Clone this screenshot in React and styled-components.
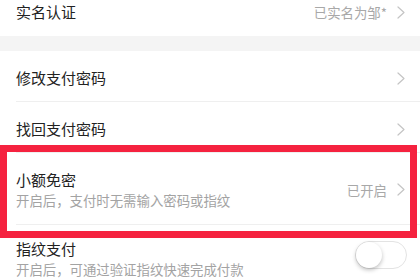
import styled, { createGlobalStyle } from 'styled-components'

const GlobalStyle = createGlobalStyle`
	html, body {
		margin: 0;
		padding: 0;
		background: #fff;
		overflow: hidden;
	}
	body {
		font-family: "Noto Sans CJK SC", "Noto Sans", sans-serif;
	}
`

const Chevron = () => (
	<svg width="8" height="13" viewBox="0 0 8 13">
		<path d="M1 1 L7 6.5 L1 12" fill="none" stroke="#c4c4c4" strokeWidth="1.2" strokeLinecap="round" strokeLinejoin="round" />
	</svg>
)

const App = () => {
	return (
		<Page>
			<GlobalStyle />
			<Row>
				<Title>实名认证</Title>
				<Extra>已实名为邹*<Chevron /></Extra>
			</Row>
			<Gap />
			<Row divided>
				<Title>修改支付密码</Title>
				<Extra><Chevron /></Extra>
			</Row>
			<Row divided>
				<Title>找回支付密码</Title>
				<Extra><Chevron /></Extra>
			</Row>
			<DoubleRow divided>
				<Texts>
					<Title>小额免密</Title>
					<Sub>开启后，支付时无需输入密码或指纹</Sub>
				</Texts>
				<Extra>已开启<Chevron /></Extra>
			</DoubleRow>
			<DoubleRow raised>
				<Texts>
					<Title>指纹支付</Title>
					<Sub>开启后，可通过验证指纹快速完成付款</Sub>
				</Texts>
				<Toggle><Knob /></Toggle>
			</DoubleRow>
			<Highlight />
		</Page>
	)
}

const Page = styled.div`
	position: relative;
	width: 420px;
	margin-top: -15px;
	background: #fff;
`

const Row = styled.div`
	display: flex;
	align-items: center;
	justify-content: space-between;
	box-sizing: border-box;
	height: 51px;
	margin-left: 16px;
	padding: 4px 15px 0 0;
	border-bottom: 1px solid ${props => props.divided ? '#efefef' : 'transparent'};
`

const DoubleRow = styled.div`
	display: flex;
	align-items: center;
	justify-content: space-between;
	box-sizing: border-box;
	height: 72px;
	margin-left: 16px;
	padding: ${props => props.raised ? '0 15px 4px 0' : '2px 15px 0 0'};
	border-bottom: 1px solid ${props => props.divided ? '#efefef' : 'transparent'};
`

const Texts = styled.div`
	display: flex;
	flex-direction: column;
`

const Title = styled.div`
	font-size: 15px;
	line-height: 20px;
	color: #222;
`

const Sub = styled.div`
	font-size: 13.4px;
	line-height: 20px;
	color: #a3a3a3;
`

const Extra = styled.div`
	display: flex;
	align-items: center;
	gap: 10px;
	font-size: 13.4px;
	color: #a8a8a8;
`

const Gap = styled.div`
	height: 15px;
	background: #f4f4f4;
`

const Toggle = styled.div`
	position: relative;
	box-sizing: border-box;
	width: 52px;
	height: 28px;
	margin: -7px -2px 0 0;
	border-radius: 14px;
	border: 1px solid #e3e3e3;
	background: #fff;
`

const Knob = styled.div`
	position: absolute;
	left: 0;
	top: 0;
	width: 26px;
	height: 26px;
	border-radius: 50%;
	background: #fff;
	box-shadow: 0 2px 4px rgba(0, 0, 0, 0.25);
`

const Highlight = styled.div`
	position: absolute;
	left: 0;
	top: 160px;
	width: 417px;
	height: 93px;
	box-sizing: border-box;
	border: 7px solid #f5223f;
	pointer-events: none;
`

export default App
